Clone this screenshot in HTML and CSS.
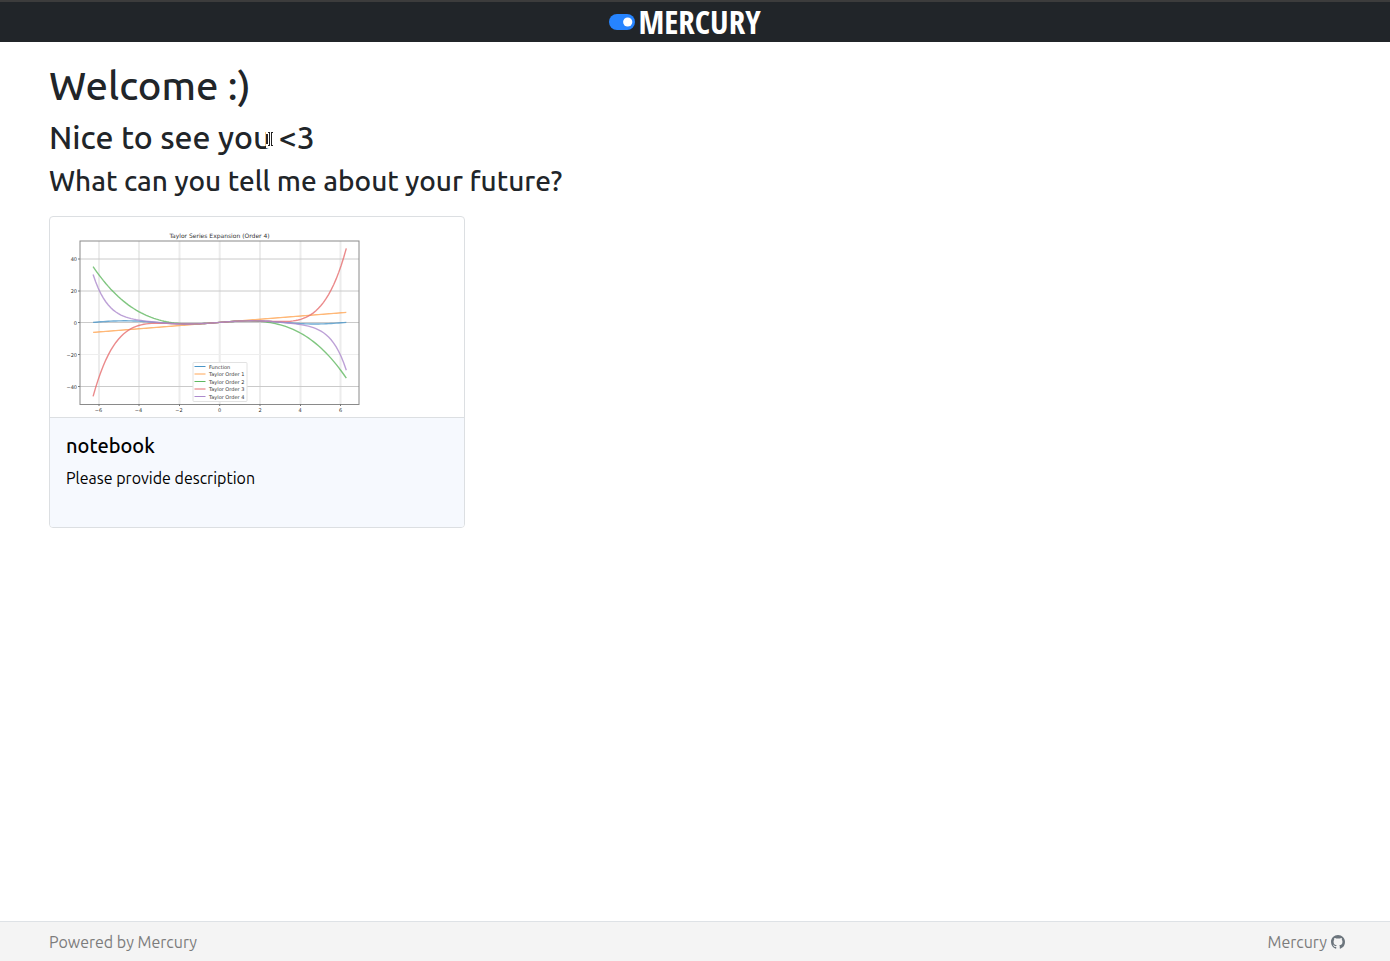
FILE: index.html
```html
<!DOCTYPE html>
<html lang="en">
<head>
<meta charset="utf-8">
<meta name="viewport" content="width=device-width, initial-scale=1">
<title>Mercury</title>
<link rel="stylesheet" href="styles.css">
</head>
<body>
<header class="navbar">
  <a class="brand" href="#">
    <svg class="brand-mark" width="26" height="16" viewBox="0 0 26 16" aria-hidden="true"><rect width="26" height="16" rx="8" fill="#2684ff"/><circle cx="18.700" cy="8" r="4.600" fill="#fff"/></svg>
    <span class="brand-name">MERCURY</span>
  </a>
</header>
<main class="content">
  <h1 class="title">Welcome :)</h1>
  <h2 class="subtitle">Nice to see you &lt;3<svg class="cursor" width="9" height="18" viewBox="0 0 9 18" aria-hidden="true"><path d="M0 0h9v4H7v10h2v4H0v-4h2V4H0z" fill="#fff"/><path d="M2 2.500h2M5 2.500h2M2 15.500h2M5 15.500h2M3.500 3v12M5.500 3v12" stroke="#222" fill="none"/></svg></h2>
  <h3 class="question">What can you tell me about your future?</h3>
  <a class="card" href="#">
    <svg class="chart" viewBox="50 217 414 200" role="img" aria-label="Taylor Series Expansion (Order 4)">
      <g class="grid">
        <path class="grid-v" d="M99 241V404M139 241V404M179.500 241V404M219.700 241V404M260 241V404M300.500 241V404M340.500 241V404"/>
        <path class="grid-h" d="M80 259H359M80 291H359M80 322.500H359M80 386.500H359"/>
        <path class="grid-faint" d="M80 354.500H359"/>
      </g>
      <g id="curves" class="curves"></g>
      <rect class="frame" x="80" y="241" width="279" height="163.500"/>
      <path class="ticks" d="M78 259h2M78 291h2M78 322.500h2M78 354.500h2M78 386.500h2M99 404v2M139 404v2M179.500 404v2M219.700 404v2M260 404v2M300.500 404v2M340.500 404v2"/>
      <text class="chart-title" x="219.500" y="238">Taylor Series Expansion (Order 4)</text>
      <g class="y-labels">
        <text x="77" y="261">40</text><text x="77" y="293">20</text><text x="77" y="324.500">0</text><text x="77" y="356.500">−20</text><text x="77" y="388.500">−40</text>
      </g>
      <g class="x-labels">
        <text x="98.500" y="411.500">−6</text><text x="138.500" y="411.500">−4</text><text x="179" y="411.500">−2</text><text x="219.700" y="411.500">0</text><text x="260" y="411.500">2</text><text x="300" y="411.500">4</text><text x="340.500" y="411.500">6</text>
      </g>
      <rect class="legend-box" x="193" y="362.500" width="54" height="39" rx="1"/>
      <g class="legend-lines">
        <path class="fn" d="M194.500 366.500h11"/><path class="o1" d="M194.500 374h11"/><path class="o2" d="M194.500 381.500h11"/><path class="o3" d="M194.500 389h11"/><path class="o4" d="M194.500 396.500h11"/>
      </g>
      <g class="legend-text">
        <text x="209" y="368.500">Function</text><text x="209" y="376">Taylor Order 1</text><text x="209" y="383.500">Taylor Order 2</text><text x="209" y="391">Taylor Order 3</text><text x="209" y="398.500">Taylor Order 4</text>
      </g>
    </svg>
    <div class="card-body">
      <h4 class="card-title">notebook</h4>
      <p class="card-text">Please provide description</p>
    </div>
  </a>
</main>
<footer class="footer">
  <span>Powered by Mercury</span>
  <a class="footer-link" href="#">Mercury
    <svg width="14" height="14" viewBox="0 0 16 16" aria-hidden="true"><path fill="#6c757d" d="M8 0C3.580 0 0 3.580 0 8c0 3.540 2.290 6.530 5.470 7.590.4.070.55-.17.55-.38 0-.19-.01-.82-.01-1.490-2.010.37-2.530-.49-2.690-.94-.09-.23-.48-.94-.82-1.130-.28-.15-.68-.52-.01-.53.63-.01 1.080.58 1.230.82.72 1.210 1.870.87 2.330.66.070-.52.280-.87.510-1.070-1.780-.2-3.640-.89-3.640-3.950 0-.87.310-1.590.82-2.150-.08-.2-.36-1.020.08-2.120 0 0 .67-.21 2.200.82.640-.18 1.320-.27 2-.27s1.360.09 2 .27c1.530-1.040 2.200-.82 2.200-.82.440 1.100.160 1.920.080 2.120.510.560.820 1.270.820 2.150 0 3.070-1.870 3.750-3.650 3.950.290.250.540.730.540 1.480 0 1.070-.01 1.930-.01 2.200 0 .210.150.460.550.380A8.010 8.010 0 0 0 16 8c0-4.420-3.580-8-8-8z"/></svg>
  </a>
</footer>
<script src="chart.js"></script>
</body>
</html>
```
FILE: styles.css
```css
* { box-sizing: border-box; }
body {
  margin: 0;
  min-height: 100vh;
  display: flex;
  flex-direction: column;
  background: #fff;
  color: #212529;
  font: 16px/24px Ubuntu, "Noto Sans", sans-serif;
}
h1, h2, h3, h4, p { margin: 0; font-weight: 500; }
a { color: inherit; text-decoration: none; }
.navbar {
  display: flex;
  justify-content: center;
  height: 42px;
  border-top: 2px solid #3c3c3c;
  background: #212529;
  padding-right: 20px;
}
.brand { display: flex; align-items: center; gap: 3px; color: #fff; }
.brand-name {
  font: bold 33px/40px "Ubuntu Condensed", "Open Sans Condensed", "Roboto Condensed", "DejaVu Sans Condensed", sans-serif;
}
.content { flex: 1; padding: 20px 49px; }
.title { font-size: 40px; line-height: 48px; margin-bottom: 8px; }
.subtitle { position: relative; font-size: 32px; line-height: 38px; margin-bottom: 8px; }
.question { font-size: 28px; line-height: 34px; margin-bottom: 18px; }
.cursor { position: absolute; left: 217px; top: 12px; }
.card {
  display: block;
  width: 416px;
  max-width: 100%;
  border: 1px solid #dcdfe2;
  border-radius: 4px;
  overflow: hidden;
  color: #000;
}
.chart { display: block; width: 100%; }
.card-body {
  min-height: 110px;
  padding: 16px;
  border-top: 1px solid #dcdfe2;
  background: #f6f9fe;
}
.card-title { font-size: 20px; line-height: 24px; margin-bottom: 8px; }
.card-text { font-weight: 400; }
.footer {
  display: flex;
  justify-content: space-between;
  height: 40px;
  padding: 8px 45px 8px 49px;
  border-top: 1px solid #dee2e6;
  background: #f4f4f4;
  color: #7c7c7c;
}
.footer-link { display: flex; align-items: center; gap: 4px; }

.chart text { font-family: "DejaVu Sans", sans-serif; font-size: 5px; fill: #333; }
.chart .chart-title { font-size: 6px; text-anchor: middle; }
.y-labels { text-anchor: end; }
.x-labels { text-anchor: middle; }
.grid path, .curves path, .frame, .ticks, .legend-lines path { fill: none; }
.grid-v { stroke: #ececec; stroke-width: 2; }
.grid-h { stroke: #cacaca; }
.grid-faint { stroke: #eee; }
.frame { stroke: #8a8a8a; }
.ticks { stroke: #777; }
.curves path { stroke-width: 1.4; opacity: .8; }
.legend-box { fill: #fff; stroke: #e2e2e2; }
.fn { stroke: #4b96c8; }
.o1 { stroke: #ffa656; }
.o2 { stroke: #60b860; }
.o3 { stroke: #e66d6e; }
.o4 { stroke: #ad8acd; }
```
FILE: chart.js
```js
const series = [
  ["fn", Math.sin],
  ["o1", x => x],
  ["o2", x => x - x ** 3 / 6],
  ["o3", x => x - x ** 3 / 6 + x ** 5 / 120],
  ["o4", x => x - x ** 3 / 6 + x ** 5 / 120 - x ** 7 / 5040]
];
const group = document.getElementById("curves");
for (const [name, f] of series) {
  const points = [];
  for (let i = 0; i <= 100; i++) {
    const x = (i / 50 - 1) * 2 * Math.PI;
    points.push((219.7 + x * 20.15).toFixed(2) + " " + (322.4 - f(x) * 1.59).toFixed(2));
  }
  const path = document.createElementNS("http://www.w3.org/2000/svg", "path");
  path.setAttribute("class", name);
  path.setAttribute("d", "M" + points.join("L"));
  group.appendChild(path);
}
```
